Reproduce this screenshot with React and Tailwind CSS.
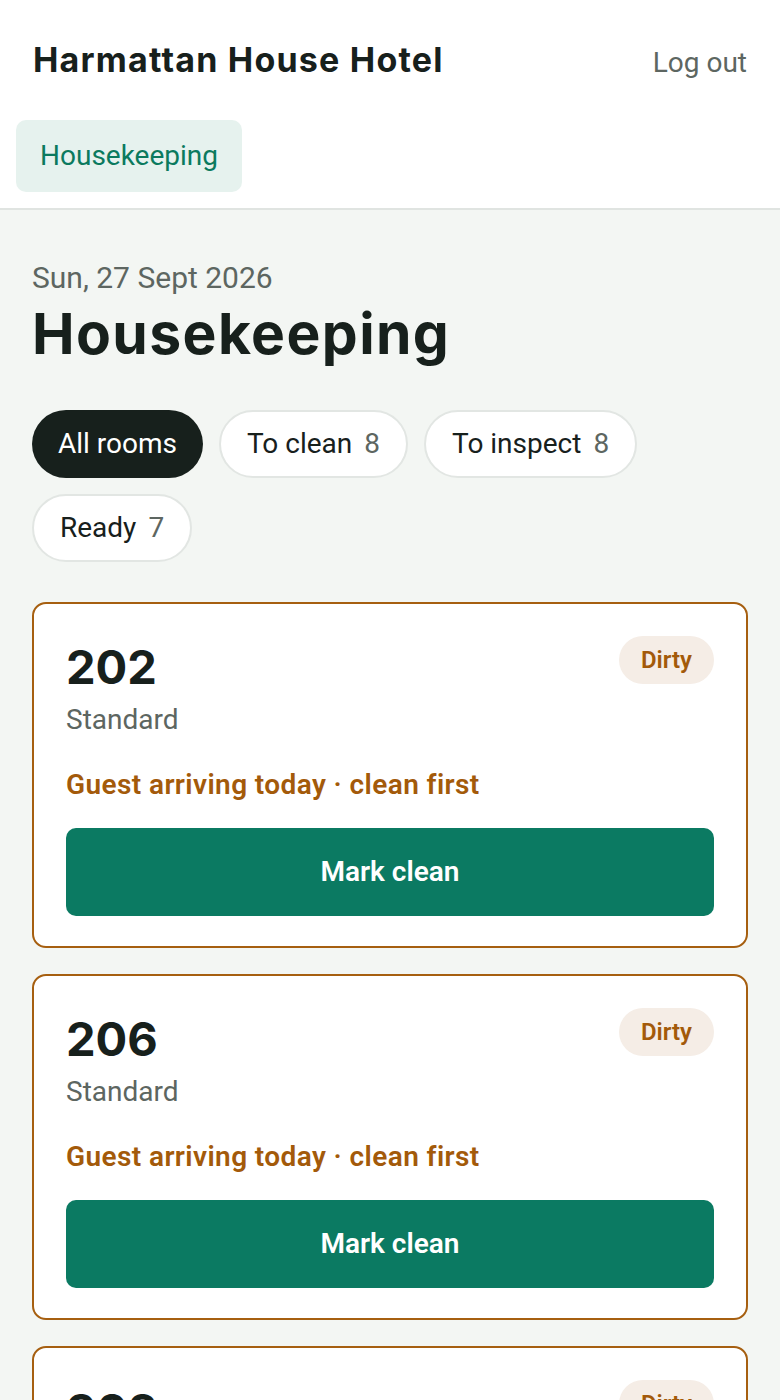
import { useState } from 'react'

const rooms = [
  { number: '202', type: 'Standard', status: 'Dirty', note: 'Guest arriving today · clean first' },
  { number: '206', type: 'Standard', status: 'Dirty', note: 'Guest arriving today · clean first' },
  { number: '302', type: 'Standard', status: 'Dirty', note: 'Guest arriving today · clean first' },
]

const filters = [
  { label: 'All rooms' },
  { label: 'To clean', count: 8 },
  { label: 'To inspect', count: 8 },
  { label: 'Ready', count: 7 },
]

export default function App() {
  const [active, setActive] = useState('All rooms')

  return (
    <div className="min-h-screen bg-[#f3f6f3] font-['Roboto','Noto_Sans',sans-serif] text-[#17201c]">
      {/* Header */}
      <header className="bg-white border-b-2 border-[#e0e4e1]">
        <div className="flex items-baseline justify-between px-[33px] pt-[40px]">
          <h1 className="font-['Inter',sans-serif] text-[34px] font-bold tracking-[1.2px] leading-[40px]">
            Harmattan House Hotel
          </h1>
          <button className="text-[28px] text-[#5d6661] leading-[40px]">Log out</button>
        </div>
        <nav className="px-4 pt-[37px] pb-[16px]">
          <span className="inline-flex items-center h-[72px] px-[24px] rounded-[10px] bg-[#e6f2ee] text-[#0b7a5e] text-[28px]">
            Housekeeping
          </span>
        </nav>
      </header>

      <main className="px-8 pt-[50px]">
        <p className="text-[30px] text-[#5d6661] leading-[36px]">Sun, 27 Sept 2026</p>
        <h2 className="font-['Inter',sans-serif] text-[57px] font-bold tracking-[1.4px] leading-[64px] mt-[6px]">
          Housekeeping
        </h2>

        {/* Filters */}
        <div className="flex flex-wrap gap-4 mt-[44px]">
          {filters.map((f) => {
            const on = active === f.label
            return (
              <button
                key={f.label}
                onClick={() => setActive(f.label)}
                className={
                  on
                    ? 'h-[68px] px-[26px] rounded-full bg-[#17201c] text-white text-[28px] flex items-center gap-3'
                    : 'h-[68px] px-[26px] rounded-full bg-white border-2 border-[#e2e6e3] text-[#17201c] text-[28px] flex items-center gap-3'
                }
              >
                {f.label}
                {f.count != null && <span className="text-[#5d6661]">{f.count}</span>}
              </button>
            )
          })}
        </div>

        {/* Rooms */}
        <div className="flex flex-col gap-[26px] mt-[40px]">
          {rooms.map((r) => (
            <div key={r.number} className="bg-white border-2 border-[#a65f10] rounded-[14px] px-[32px] pt-[32px] pb-[30px]">
              <div className="flex items-start justify-between">
                <div>
                  <div className="font-['Inter',sans-serif] text-[47px] font-bold leading-[56px] mt-[3px]">{r.number}</div>
                  <div className="text-[28px] text-[#5d6661] leading-[34px] mt-[8px]">{r.type}</div>
                </div>
                <span className="h-[48px] px-[22px] rounded-full bg-[#f5ede6] text-[#a35a0a] text-[24px] font-semibold flex items-center">
                  {r.status}
                </span>
              </div>
              <p className="text-[28px] font-semibold tracking-[0.4px] text-[#a35a0a] leading-[34px] mt-[31px]">{r.note}</p>
              <button className="mt-[26px] w-full h-[88px] rounded-[10px] bg-[#0b7a62] text-white text-[28px] font-semibold">
                Mark clean
              </button>
            </div>
          ))}
        </div>
      </main>
    </div>
  )
}
